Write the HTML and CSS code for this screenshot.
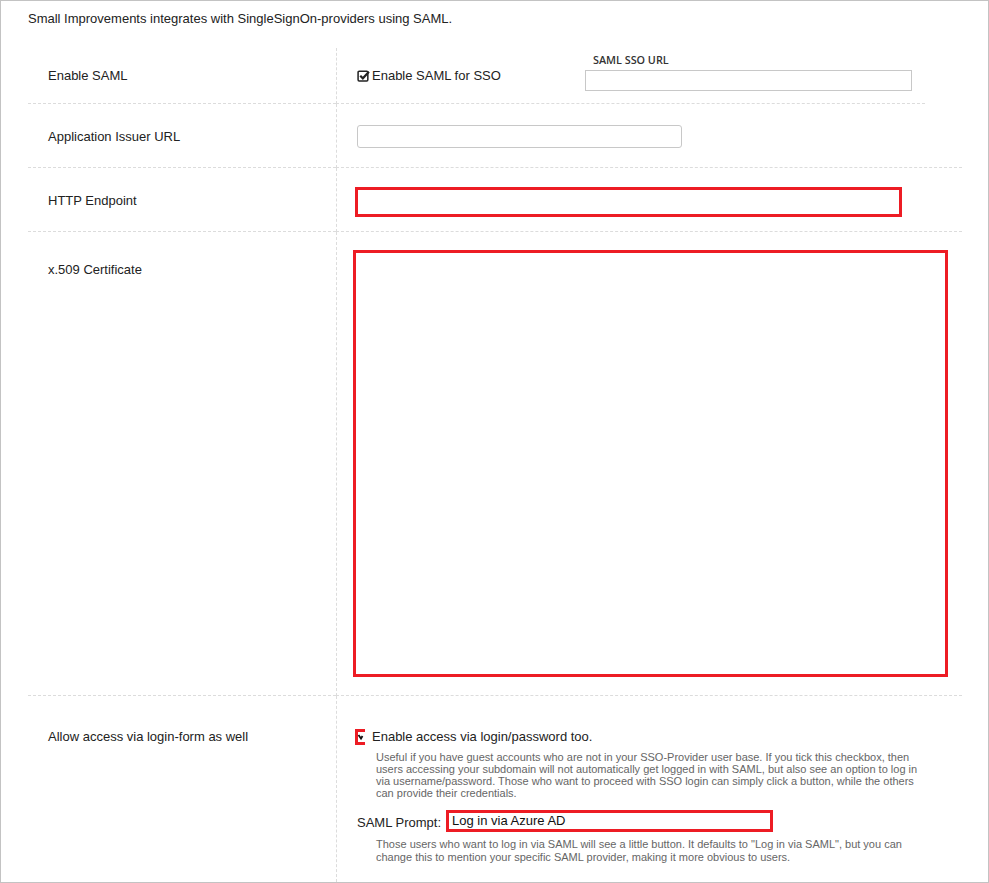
FILE: index.html
```html
<!DOCTYPE html>
<html>
<head>
<meta charset="utf-8">
<link rel="stylesheet" href="styles.css">
</head>
<body>
<div class="frame">
  <p class="intro">Small Improvements integrates with SingleSignOn-providers using SAML.</p>
  <div class="table">
    <div class="row row-saml">
      <div class="cell-l"><span class="label">Enable SAML</span></div>
      <div class="cell-r saml-cell">
        <div class="check-line saml-check">
          <svg class="chk" width="13" height="13" viewBox="0 0 12 12"><rect x="1" y="2" width="9" height="9" rx="1" fill="none" stroke="#222" stroke-width="1.4"/><path d="M3 6.2 L5.4 8.6 L11 2.6" fill="none" stroke="#222" stroke-width="2"/></svg>
          <span>Enable SAML for SSO</span>
        </div>
        <div class="sso-field">
          <div class="sso-label">SAML SSO URL</div>
          <div class="input sso-input"></div>
        </div>
      </div>
    </div>
    <div class="row row-64">
      <div class="cell-l center"><span class="label">Application Issuer URL</span></div>
      <div class="cell-r center"><div class="input issuer-input"></div></div>
    </div>
    <div class="row row-64">
      <div class="cell-l center"><span class="label">HTTP Endpoint</span></div>
      <div class="cell-r center"><div class="redbox endpoint-box"></div></div>
    </div>
    <div class="row row-cert">
      <div class="cell-l top-cert"><span class="label">x.509 Certificate</span></div>
      <div class="cell-r cert-cell"><div class="redbox cert-box"></div></div>
    </div>
    <div class="row row-last">
      <div class="cell-l top-last"><span class="label">Allow access via login-form as well</span></div>
      <div class="cell-r last-cell">
        <div class="check-line">
          <svg class="chk2" width="10" height="16" viewBox="0 0 10 16"><rect x="0" y="0" width="10" height="16" fill="#ed1c24"/><rect x="3" y="3" width="7" height="10" fill="#fff"/><path d="M3.5 6 L6 9.5 L7.5 7" fill="none" stroke="#111" stroke-width="1.8"/></svg>
          <span class="chk2-text">Enable access via login/password too.</span>
        </div>
        <div class="help help1">
          <span class="hl">Useful if you have guest accounts who are not in your SSO-Provider user base. If you tick this checkbox, then</span>
          <span class="hl">users accessing your subdomain will not automatically get logged in with SAML, but also see an option to log in</span>
          <span class="hl">via username/password. Those who want to proceed with SSO login can simply click a button, while the others</span>
          <span class="hl">can provide their credentials.</span>
        </div>
        <div class="prompt-line">
          <span class="prompt-label">SAML Prompt:</span>
          <div class="redbox prompt-box">Log in via Azure AD</div>
        </div>
        <div class="help help2">
          <span class="hl">Those users who want to log in via SAML will see a little button. It defaults to "Log in via SAML", but you can</span>
          <span class="hl">change this to mention your specific SAML provider, making it more obvious to users.</span>
        </div>
      </div>
    </div>
  </div>
</div>
</body>
</html>
```

FILE: styles.css
```css
html, body {
  margin: 0;
  padding: 0;
  background: #fff;
}
body {
  font-family: "Liberation Sans", Arial, sans-serif;
  color: #222;
  font-size: 13px;
}
.frame {
  box-sizing: border-box;
  width: 989px;
  height: 883px;
  border: 1px solid #c3c3c3;
  display: flex;
  flex-direction: column;
}
.intro {
  margin: 0;
  padding: 10px 0 0 27px;
  line-height: 16px;
  font-size: 13px;
}
.table {
  margin: 21px 26px 0 27px;
  flex: 1;
  display: flex;
  flex-direction: column;
}
.row {
  display: grid;
  grid-template-columns: 308px 1fr;
}
.cell-l {
  border-bottom: 1px dashed #dcdcdc;
  padding-left: 20px;
}
.cell-r {
  border-left: 1px dashed #dcdcdc;
  border-bottom: 1px dashed #dcdcdc;
  padding-left: 20px;
}
.label {
  line-height: 16px;
  font-size: 13px;
  color: #222;
}
.center {
  display: flex;
  align-items: center;
}
.center .label {
  margin-top: 2px;
}
.row-saml {
  height: 56px;
}
.row-saml .cell-l {
  display: flex;
  align-items: center;
}
.saml-cell {
  display: flex;
  align-items: flex-start;
  margin-right: 37px;
}
.check-line {
  display: flex;
  align-items: center;
  line-height: 16px;
}
.saml-check {
  width: 228px;
  margin-top: 20px;
}
.chk {
  margin-right: 2px;
  margin-top: -1px;
}
.sso-field {
  margin-top: 6px;
}
.sso-label {
  font-family: "Open Sans", "Noto Sans", sans-serif;
  font-weight: 600;
  font-size: 10.8px;
  line-height: 12px;
  color: #333;
  padding-left: 8px;
  margin-bottom: 4px;
}
.input {
  box-sizing: border-box;
  border: 1px solid #c8c8c8;
  border-radius: 2px;
  background: #fff;
}
.sso-input {
  width: 327px;
  height: 21px;
  border-radius: 0;
}
.row-64 {
  height: 64px;
}
.issuer-input {
  width: 325px;
  height: 23px;
  border-radius: 3px;
  margin-top: 1px;
}
.redbox {
  box-sizing: border-box;
  border: 3px solid #ed1c24;
  background: #fff;
}
.endpoint-box {
  margin-left: -2px;
  width: 547px;
  height: 30px;
  margin-top: 5px;
}
.row-cert {
  height: 464px;
}
.top-cert {
  padding-top: 30px;
}
.cert-cell {
  padding-top: 18px;
}
.cert-box {
  margin-left: -4px;
  width: 595px;
  height: 427px;
}
.row-last {
  flex: 1;
}
.row-last .cell-l,
.row-last .cell-r {
  border-bottom: none;
}
.top-last {
  padding-top: 33px;
}
.last-cell {
  padding-top: 33px;
  padding-left: 18px;
}
.chk2 {
  margin-right: 7px;
}
.help {
  color: #666;
  font-size: 11px;
  line-height: 12px;
  padding-left: 21px;
}
.hl {
  display: block;
  white-space: nowrap;
}
.help1 {
  margin-top: 6px;
}
.prompt-line {
  display: flex;
  align-items: center;
  margin-top: 14px;
  padding-left: 2px;
}
.prompt-label {
  line-height: 16px;
  margin-right: 5px;
}
.prompt-box {
  width: 327px;
  height: 22px;
  line-height: 16px;
  padding-left: 3px;
  color: #111;
  margin-top: -3px;
}
.help2 {
  margin-top: 6px;
  line-height: 13px;
}
```
